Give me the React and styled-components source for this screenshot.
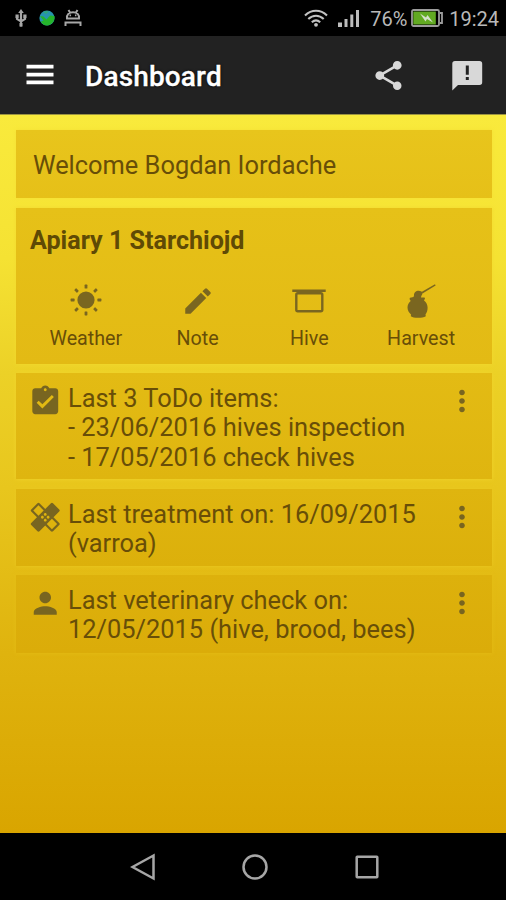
import React from 'react';
import styled, { createGlobalStyle } from 'styled-components';
import {
    MdShare,
    MdEdit,
    MdAssignmentTurnedIn,
    MdHealing,
    MdPerson,
    MdMoreVert,
} from 'react-icons/md';

const GlobalStyle = createGlobalStyle`
    * {
        box-sizing: border-box;
    }

    body {
        margin: 0;
        background: #000;
        font-family: Roboto, "Noto Sans", sans-serif;
    }

    svg {
        display: block;
        flex-shrink: 0;
    }
`;

const Screen = styled.div`
    display: flex;
    flex-direction: column;
    width: 506px;
    height: 900px;
    overflow: hidden;
`;

const StatusBar = styled.header`
    display: flex;
    justify-content: space-between;
    align-items: center;
    height: 36px;
    padding: 0 7px 0 13px;
    background: #000;
    color: #b9b9b9;
`;

const StatusGroup = styled.div`
    display: flex;
    align-items: center;
    gap: ${(props) => props.$gap}px;
`;

const StatusText = styled.span`
    width: ${(props) => props.$width}px;
    padding-top: 2px;
    font-size: 20px;
    line-height: 24px;
    text-align: right;
    white-space: nowrap;
`;

const AppBar = styled.div`
    display: flex;
    align-items: center;
    height: 78px;
    padding: 0 22px 0 26px;
    background: #222;
    color: #fff;
`;

const Title = styled.h1`
    flex: 1;
    margin: 0 0 0 31px;
    padding-top: 3px;
    font-size: 28px;
    font-weight: 500;
    line-height: 34px;
    letter-spacing: 0.15px;
    text-shadow: 0 0 3px #000;
    -webkit-text-stroke: 0.3px #fff;
`;

const BarActions = styled.div`
    display: flex;
    gap: 44px;
    color: #d8d8d8;
`;

const Content = styled.main`
    flex: 1;
    display: flex;
    flex-direction: column;
    gap: 9.5px;
    padding: 15px 14px 0 16px;
    background: linear-gradient(#f9ea3c 0%, #f5e233 20%, #ecd127 36%, #e8c61d 52%, #dfb30e 75%, #d9a500 100%);
    border-top: 1px solid #9c9440;
`;

const Card = styled.section`
    height: ${(props) => props.$height}px;
    background: linear-gradient(${(props) => props.$from}, ${(props) => props.$to});
    box-shadow: 0 0 4px ${(props) => props.$glow};
    color: #684e08;
`;

const WelcomeText = styled.p`
    margin: 0;
    padding: 20px 17px;
    font-size: 25.4px;
    line-height: 30px;
`;

const ApiaryName = styled.h2`
    margin: 0;
    padding: 18px 14px 0;
    color: #5f4a05;
    font-size: 25.1px;
    font-weight: 700;
    line-height: 30px;
`;

const Actions = styled.div`
    display: grid;
    grid-template-columns: repeat(4, 1fr);
    padding: 28px 15px 0 14px;
`;

const Action = styled.div`
    display: flex;
    flex-direction: column;
    align-items: center;
    gap: 9px;
    color: #7a6620;
`;

const ActionLabel = styled.span`
    color: #684e08;
    font-size: 19.7px;
    line-height: 24px;
`;

const ItemCard = styled(Card)`
    display: flex;
    align-items: flex-start;
    padding: 11px 13px 0 12px;
`;

const ItemIcon = styled.div`
    width: 40px;
    color: #786520;
`;

const ItemText = styled.div`
    flex: 1;
    font-size: 25.4px;
    line-height: 29.4px;
    white-space: nowrap;
`;

const MoreButton = styled.div`
    color: #786520;
`;

const NavBar = styled.nav`
    display: flex;
    justify-content: center;
    align-items: center;
    gap: 86px;
    height: 67px;
    padding-left: 3px;
    background: #000;
`;

const UsbIcon = () => (
    <svg width="16" height="20" viewBox="0 0 16 20" fill="none" stroke="#a6a6a6" strokeWidth="2.2">
        <path d="M8 4v14.500M4 8v3L8 13.500l4-2.500V7.500" />
        <path d="M8 1l2.800 4H5.200zM2.500 6.500h3.200v3.500H2.500zM10.300 6.500h3.200v3.500h-3.200zM6.500 15h3v3.500h-3z" fill="#a6a6a6" stroke="none" />
    </svg>
);

const GlobeIcon = () => (
    <svg width="16" height="16" viewBox="0 0 16 16">
        <circle cx="8" cy="8" r="7.600" fill="#2794ae" />
        <path d="M1 6l3.500.5 3 3 3.500-4 4.500.5c.5 5-2.500 9-7.500 9.500-3 0-5.500-2-6-4l2.500-1z" fill="#25b52c" />
        <path d="M4 1.800l3 2.200 3-3z" fill="#2fa876" />
    </svg>
);

const AndroidIcon = () => (
    <svg width="18" height="18" viewBox="0 0 18 18" fill="none" stroke="#a8a8a8" strokeWidth="2">
        <path d="M3 9.500C2.500 5.500 5 3.200 9 3.200s6.500 2.300 6 6.300zM4.500 1l1.500 2.500M13.500 1L12 3.500" />
        <path d="M1.500 17v-3.500h15V17" />
        <path d="M6.300 5.500v1.800M11.700 5.500v1.800" strokeWidth="1.500" />
    </svg>
);

const WifiIcon = () => (
    <svg width="24" height="18" viewBox="0 0 24 18" fill="none" stroke="#c2c2c2" strokeWidth="2.100">
        <path d="M1 6.500c6.500-6.300 15.500-6.300 22 0M4.300 10c4.600-4.400 10.800-4.400 15.400 0M7.800 13.300c2.600-2.300 5.800-2.300 8.400 0" />
        <circle cx="12" cy="15.800" r="1.900" fill="#c2c2c2" stroke="none" />
    </svg>
);

const SignalIcon = () => (
    <svg width="22" height="18" viewBox="0 0 22 18" fill="#bdbdbd">
        <path d="M0 13.500h4V18H0zM6.500 10h3v8h-3zM12.300 5.500h3V18h-3zM18 1h3v17h-3z" />
    </svg>
);

const BatteryIcon = () => (
    <svg width="32" height="18" viewBox="0 0 32 18">
        <rect x="1" y="1" width="27" height="16" rx="1.500" fill="#000" stroke="#9c9c9c" strokeWidth="1.800" />
        <rect x="2.300" y="2.500" width="22.500" height="13" fill="#62aa22" />
        <path d="M29 4h2v10h-2" fill="none" stroke="#9c9c9c" strokeWidth="1.800" />
        <path d="M9 4.500l6 4 1.500-2.500L22 13.500l-6-3.500-1.500 2.500z" fill="#d5e0cc" />
    </svg>
);

const MenuIcon = () => (
    <svg width="28" height="22" viewBox="0 0 28 22" fill="#fff">
        <path d="M.5.800h27v3.600H.5zM.5 8.800h27v3.600H.5zM.5 16.600h27v3.600H.5z" />
    </svg>
);

const FeedbackIcon = () => (
    <svg width="34" height="35" viewBox="0 0 34 35" fill="currentColor">
        <path d="M5 3h24.500a2.700 2.700 0 0 1 2.700 2.700v18.600a2.700 2.700 0 0 1-2.700 2.700H8l-5.700 5.500V5.700A2.700 2.700 0 0 1 5 3z" />
        <path d="M15.800 7.500h3v9.200h-3zM15.800 19h3v3h-3z" fill="#222" />
    </svg>
);

const SunIcon = () => (
    <svg width="34" height="34" viewBox="0 1 34 34" fill="currentColor">
        <circle cx="17" cy="17" r="8.600" />
        {[0, 45, 90, 135, 180, 225, 270, 315].map((angle) => (
            <rect key={angle} x="15.600" y="1.600" width="2.800" height="4" rx=".6" transform={`rotate(${angle} 17 17)`} />
        ))}
    </svg>
);

const HiveIcon = () => (
    <svg width="34" height="34" viewBox="0 0 34 34" fill="none" stroke="currentColor">
        <path d="M.3 6.800h33.400" strokeWidth="2.600" />
        <rect x="4.300" y="9.200" width="26" height="18" rx="1.500" strokeWidth="2.400" />
    </svg>
);

const HoneyIcon = () => (
    <svg width="34" height="34" viewBox="0 0 34 34" fill="currentColor">
        <path d="M31 .3l.6 1.200L18.500 9.500l-1-1.500z" />
        <path d="M10 11.500c-.3-4 4-6 7.500-4 1.500 1 1 3-.2 4.500l-.3 1.500h3.500l.5 1-1 2c2.500 2 3.600 4.500 3.600 7.300 0 3-.8 5-2.100 6.700l.3 1.800c-1.800 1.300-4.500 1.500-7.800 1.500s-5.500-.4-7.200-1.600l.2-1.700c-2-1.800-3.500-4-3.500-7 0-3 1.400-5 3.200-6.500l-1.200-2 .5-1.200 3.500-.8z" />
    </svg>
);

const actions = [
    { label: 'Weather', icon: <SunIcon /> },
    { label: 'Note', icon: <MdEdit size={34} /> },
    { label: 'Hive', icon: <HiveIcon /> },
    { label: 'Harvest', icon: <HoneyIcon /> },
];

const items = [
    {
        icon: <MdAssignmentTurnedIn size={34.5} />,
        lines: ['Last 3 ToDo items:', '- 23/06/2016 hives inspection', '- 17/05/2016 check hives'],
        height: 106,
        from: '#e3bb14',
        to: '#dfb50f',
        glow: '#f0d32a',
    },
    {
        icon: <MdHealing size={34.5} />,
        lines: ['Last treatment on: 16/09/2015', '(varroa)'],
        height: 77,
        from: '#dfb50f',
        to: '#dcb00b',
        glow: '#ebc820',
    },
    {
        icon: <MdPerson size={34.5} />,
        lines: ['Last veterinary check on:', '12/05/2015 (hive, brood, bees)'],
        height: 77.5,
        from: '#ddb10c',
        to: '#dbac09',
        glow: '#e5bc15',
    },
];

const App = () => {
    return (
        <Screen>
            <GlobalStyle />
            <StatusBar>
                <StatusGroup $gap={9.5}>
                    <UsbIcon />
                    <GlobeIcon />
                    <AndroidIcon />
                </StatusGroup>
                <StatusGroup $gap={3}>
                    <StatusGroup $gap={10}>
                        <WifiIcon />
                        <SignalIcon />
                        <StatusText $width={38}>76%</StatusText>
                    </StatusGroup>
                    <BatteryIcon />
                    <StatusText $width={53.5}>19:24</StatusText>
                </StatusGroup>
            </StatusBar>

            <AppBar>
                <MenuIcon />
                <Title>Dashboard</Title>
                <BarActions>
                    <MdShare size={35} />
                    <FeedbackIcon />
                </BarActions>
            </AppBar>

            <Content>
                <Card $height={68} $from="#e8c51c" $to="#e6c018" $glow="#f5df35">
                    <WelcomeText>Welcome Bogdan Iordache</WelcomeText>
                </Card>

                <Card $height={156} $from="#e6c118" $to="#e3ba14" $glow="#f2d92e">
                    <ApiaryName>Apiary 1 Starchiojd</ApiaryName>
                    <Actions>
                        {actions.map((action) => (
                            <Action key={action.label}>
                                {action.icon}
                                <ActionLabel>{action.label}</ActionLabel>
                            </Action>
                        ))}
                    </Actions>
                </Card>

                {items.map((item, index) => (
                    <ItemCard key={index} $height={item.height} $from={item.from} $to={item.to} $glow={item.glow}>
                        <ItemIcon>{item.icon}</ItemIcon>
                        <ItemText>
                            {item.lines.map((line) => (
                                <div key={line}>{line}</div>
                            ))}
                        </ItemText>
                        <MoreButton>
                            <MdMoreVert size={34} />
                        </MoreButton>
                    </ItemCard>
                ))}
            </Content>

            <NavBar>
                <svg width="26" height="28" viewBox="0 0 26 28" fill="none" stroke="#a6a6a6" strokeWidth="2.500">
                    <path d="M23.500 2.500v23L2.500 14z" />
                </svg>
                <svg width="26" height="26" viewBox="0 0 26 26" fill="none" stroke="#a6a6a6" strokeWidth="2.500">
                    <circle cx="13" cy="13" r="11.500" />
                </svg>
                <svg width="26" height="26" viewBox="0 0 26 26" fill="none" stroke="#a6a6a6" strokeWidth="2.500">
                    <rect x="2.700" y="2.700" width="20.600" height="20.600" rx=".5" />
                </svg>
            </NavBar>
        </Screen>
    );
};

export default App;
